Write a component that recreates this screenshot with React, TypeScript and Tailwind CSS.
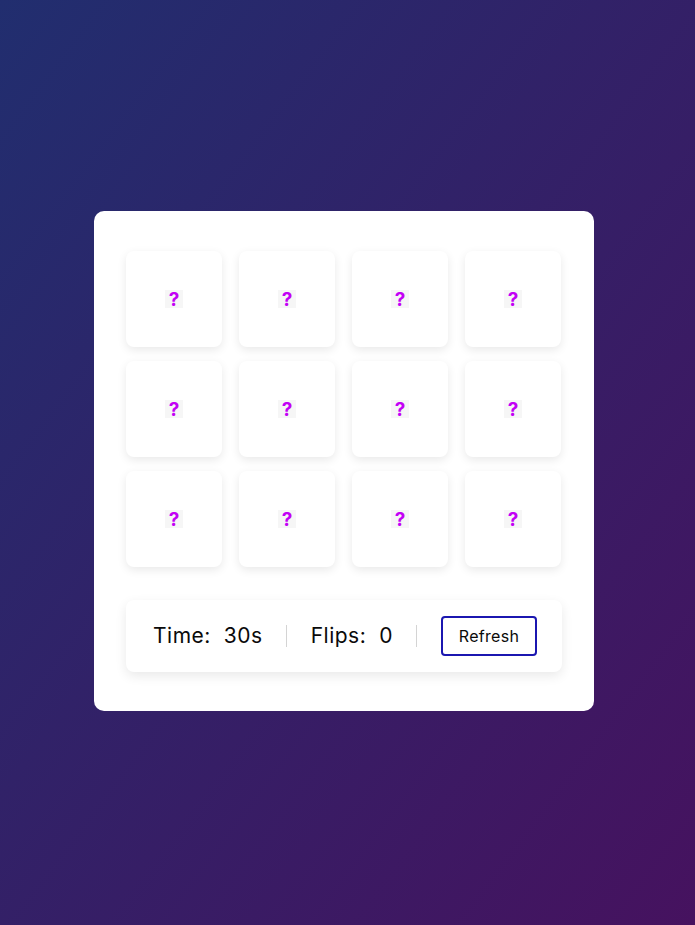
const cards = Array.from({ length: 12 }, (_, i) => i);

function Card() {
  return (
    <div className="flex h-[96px] w-[96px] items-center justify-center rounded-[8px] bg-white shadow-[0_3px_10px_rgba(0,0,0,0.09)]">
      <span className="flex h-[18px] w-[18px] items-center justify-center bg-[#f6f6f6] text-[19px] font-bold leading-none text-[#c300f5]">
        ?
      </span>
    </div>
  );
}

export default function App() {
  return (
    <div
      className="flex min-h-screen w-full items-center justify-center bg-[linear-gradient(to_bottom_right,#212e6f,#46125f)] pb-[3px] pr-[7px]"
      style={{ fontFamily: 'Inter, "Open Sans", sans-serif' }}
    >
      <div className="w-[500px] rounded-[10px] bg-white px-[32px] pb-[39px] pt-[40px]">
        <div className="grid grid-cols-[repeat(4,96px)] gap-x-[17px] gap-y-[14px]">
          {cards.map((c) => (
            <Card key={c} />
          ))}
        </div>
        <div className="mt-[33px] flex h-[72px] items-center justify-between rounded-[8px] bg-white pl-[27px] pr-[25px] shadow-[0_4px_12px_rgba(0,0,0,0.09)]">
          <p className="text-[21px] tracking-[0.5px] text-[#0a0a0a]">
            Time:<span className="ml-[13px]">30s</span>
          </p>
          <span className="h-[22px] w-px bg-[#d4d4d4]" />
          <p className="text-[21px] tracking-[0.5px] text-[#0a0a0a]">
            Flips:<span className="ml-[13px]">0</span>
          </p>
          <span className="h-[22px] w-px bg-[#d4d4d4]" />
          <button className="h-[40px] w-[96px] rounded-[4px] border-2 border-[#1b17b0] text-[16px] tracking-[0.3px] text-[#0a0a0a]">
            Refresh
          </button>
        </div>
      </div>
    </div>
  );
}
